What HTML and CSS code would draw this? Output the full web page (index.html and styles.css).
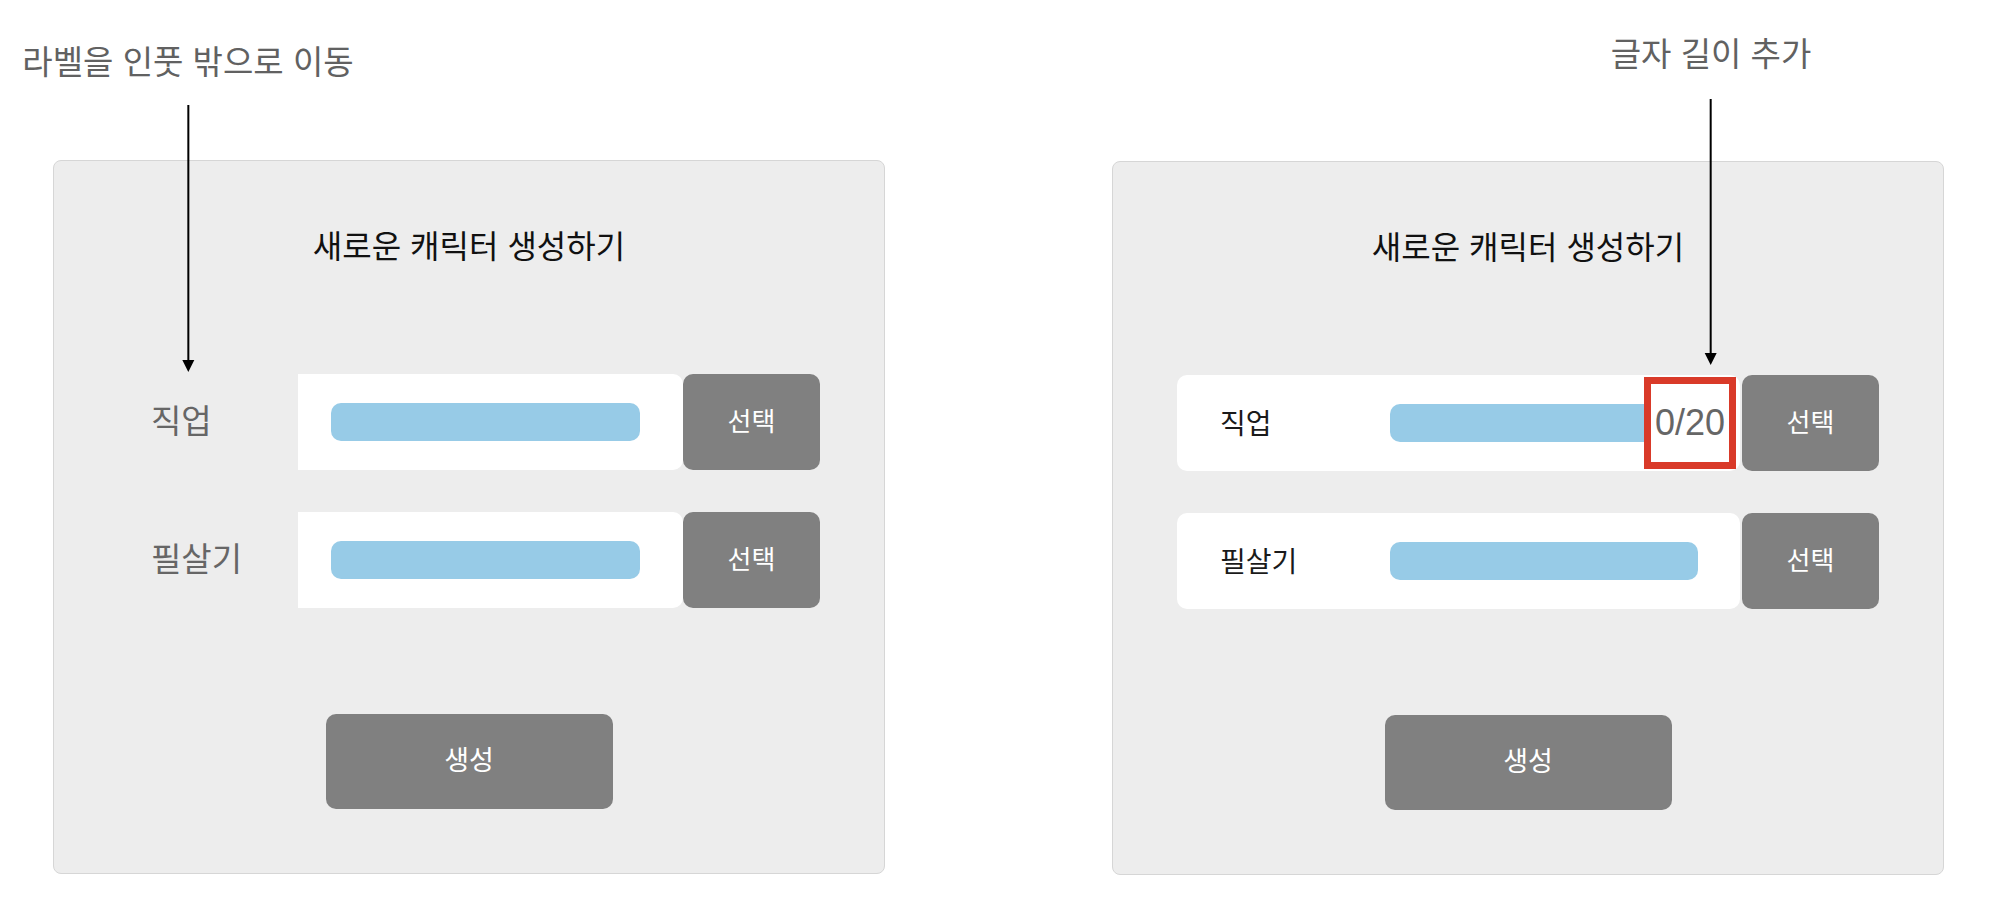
FILE: index.html
```html
<!DOCTYPE html>
<html lang="ko">
<head>
<meta charset="utf-8">
<title>새로운 캐릭터 생성하기</title>
<link rel="stylesheet" href="styles.css">
</head>
<body>
<div class="page">
  <section class="variant variant--left">
    <div class="callout callout--left">
      <p class="callout-text">라벨을 인풋 밖으로 이동</p>
      <div class="arrow arrow--left"></div>
    </div>
    <div class="panel">
      <h1 class="panel-title">새로운 캐릭터 생성하기</h1>
      <div class="rows">
        <div class="row row--outside">
          <span class="label-outside">직업</span>
          <div class="field field--flat"><span class="bar"></span></div>
          <button class="btn-select">선택</button>
        </div>
        <div class="row row--outside">
          <span class="label-outside">필살기</span>
          <div class="field field--flat"><span class="bar"></span></div>
          <button class="btn-select">선택</button>
        </div>
      </div>
      <button class="btn-create">생성</button>
    </div>
  </section>

  <section class="variant variant--right">
    <div class="callout callout--right">
      <p class="callout-text">글자 길이 추가</p>
      <div class="arrow arrow--right"></div>
    </div>
    <div class="panel">
      <h1 class="panel-title">새로운 캐릭터 생성하기</h1>
      <div class="rows">
        <div class="row row--inside">
          <div class="field field--inside field--counted">
            <span class="label-inside">직업</span>
            <span class="bar bar--cut"></span>
            <span class="counter">0/20</span>
          </div>
          <button class="btn-select">선택</button>
        </div>
        <div class="row row--inside">
          <div class="field field--inside">
            <span class="label-inside">필살기</span>
            <span class="bar"></span>
          </div>
          <button class="btn-select">선택</button>
        </div>
      </div>
      <button class="btn-create">생성</button>
    </div>
  </section>
</div>
</body>
</html>
```

FILE: styles.css
```css
html, body {
  margin: 0;
  padding: 0;
  background: #ffffff;
}

body {
  font-family: "Noto Sans CJK KR", "Noto Sans", sans-serif;
  width: 1998px;
  height: 916px;
  overflow: hidden;
}

.page {
  display: flex;
  align-items: flex-start;
  gap: 227px;
  padding-left: 53px;
}

.variant {
  position: relative;
  flex: 0 0 832px;
  width: 832px;
}

.variant--left {
  padding-top: 160px;
}

.variant--right {
  padding-top: 161px;
}

/* annotation callouts */
.callout {
  position: absolute;
  z-index: 2;
  display: flex;
  flex-direction: column;
  align-items: center;
  transform: translateX(-50%);
  white-space: nowrap;
}

.callout--left {
  top: 40px;
  left: 135px;
}

.callout--right {
  top: 32px;
  left: 599px;
}

.callout-text {
  margin: 0;
  font-size: 33px;
  line-height: 40px;
  color: #616161;
}

.arrow {
  position: relative;
  width: 2px;
  background: #000;
}

.arrow::after {
  content: "";
  position: absolute;
  top: 100%;
  left: 50%;
  transform: translateX(-50%);
  border-left: 6px solid transparent;
  border-right: 6px solid transparent;
  border-top: 12px solid #000;
}

.arrow--left {
  margin-top: 25px;
  height: 255px;
}

.arrow--right {
  margin-top: 27px;
  height: 254px;
}

/* panel */
.panel {
  box-sizing: border-box;
  width: 832px;
  height: 714px;
  background: #ededed;
  border: 1px solid #d6d6d6;
  border-radius: 8px;
  padding: 61px 64px 0;
  display: flex;
  flex-direction: column;
}

.panel-title {
  margin: 0;
  font-size: 32px;
  font-weight: 400;
  line-height: 44px;
  text-align: center;
  color: #111;
}

.rows {
  margin-top: 108px;
  display: flex;
  flex-direction: column;
  gap: 42px;
}

.row {
  display: flex;
  height: 96px;
  align-items: stretch;
}

.row--outside {
  justify-content: flex-end;
}

.row--inside {
  gap: 2px;
}

.label-outside {
  flex: 0 0 147px;
  align-self: center;
  margin-bottom: 6px;
  font-size: 33px;
  line-height: 40px;
  color: #666;
}

.field {
  background: #fff;
  display: flex;
  align-items: center;
  box-sizing: border-box;
}

.field--flat {
  flex: 0 0 385px;
  padding: 0 43px 0 33px;
  border-radius: 0 10px 10px 0;
}

.field--inside {
  flex: 1;
  padding: 0 42px 0 43px;
  border-radius: 10px;
}

.field--counted {
  padding-right: 4px;
}

.label-inside {
  flex: 0 0 170px;
  margin-bottom: 3px;
  font-size: 28px;
  line-height: 36px;
  color: #1a1a1a;
}

.bar {
  display: block;
  flex: 0 0 308px;
  height: 38px;
  background: #97cbe7;
  border-radius: 10px;
}

.field--flat .bar {
  flex-basis: 309px;
}

.bar--cut {
  flex: 1;
  border-radius: 10px 0 0 10px;
}

.counter {
  box-sizing: border-box;
  flex: 0 0 92px;
  height: 92px;
  border: 7px solid #d93a29;
  background: #fff;
  display: flex;
  align-items: center;
  justify-content: center;
  font-family: "Liberation Sans", Arial, sans-serif;
  font-size: 36px;
  color: #666;
}

.btn-select,
.btn-create {
  border: 0;
  padding: 0 0 6px;
  margin: 0;
  background: #808080;
  color: #fff;
  font-family: "Noto Sans CJK KR", "Noto Sans", sans-serif;
  font-size: 27px;
  font-weight: 400;
  border-radius: 10px;
}

.btn-select {
  flex: 0 0 137px;
  font-size: 26px;
}

.btn-create {
  align-self: center;
  margin-top: 106px;
  width: 287px;
  height: 95px;
}
```
